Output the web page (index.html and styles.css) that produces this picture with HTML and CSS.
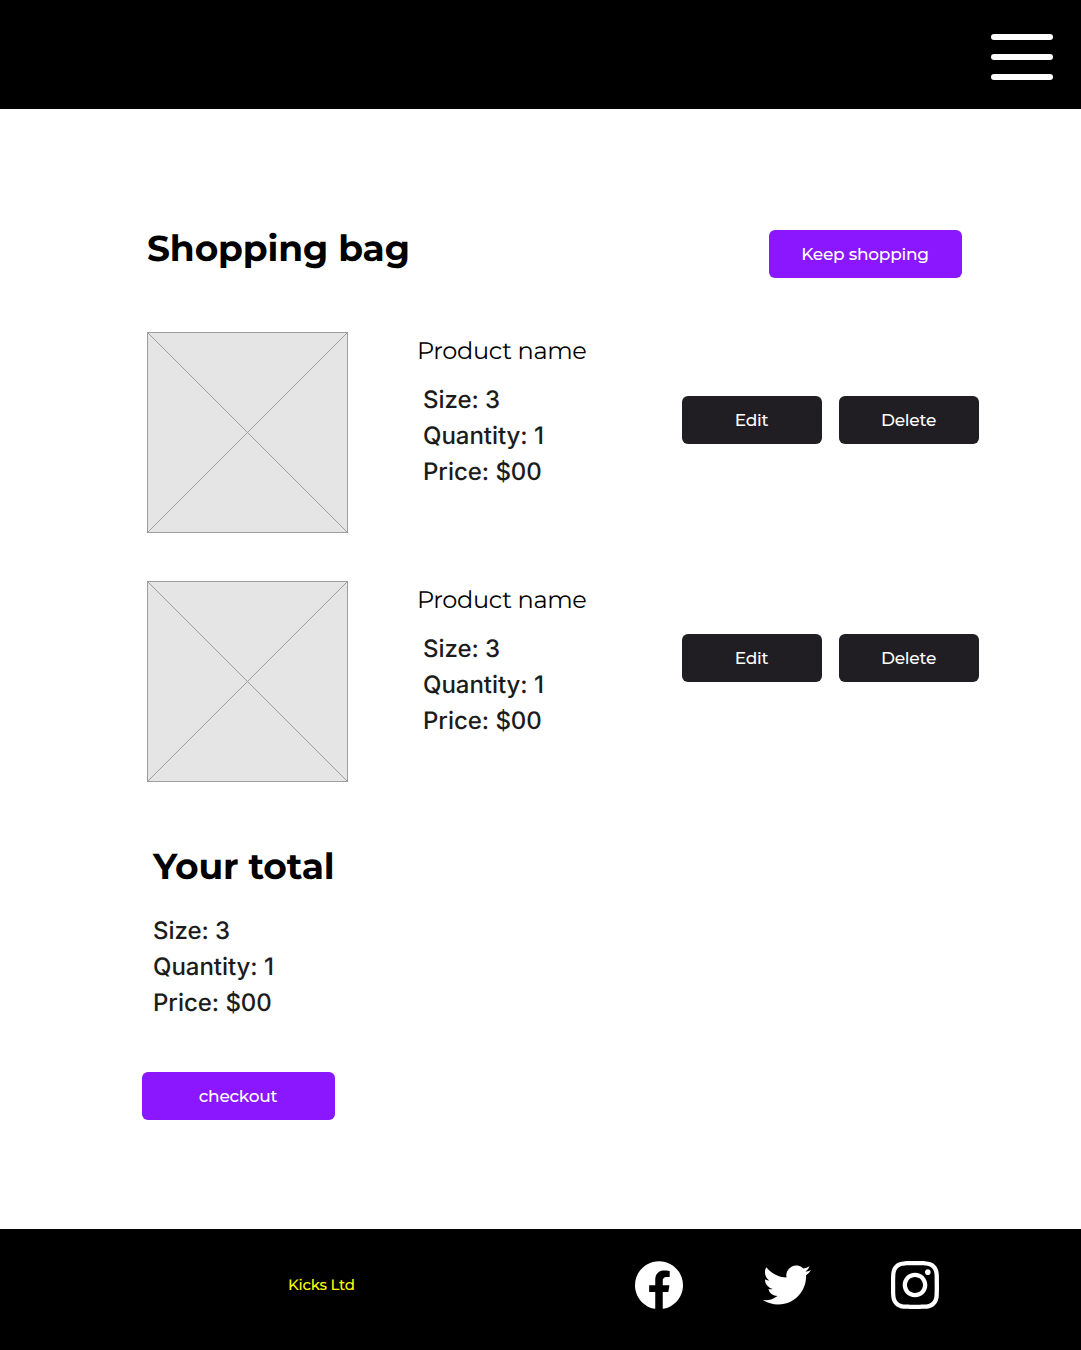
FILE: index.html
```html
<!DOCTYPE html>
<html lang="en">
<head>
<meta charset="utf-8">
<title>Shopping bag</title>
<link rel="stylesheet" href="styles.css">
</head>
<body>
<header class="topbar">
  <button class="menu" aria-label="Menu"><span class="menu-bar"></span><span class="menu-bar"></span><span class="menu-bar"></span></button>
</header>
<main class="page">
  <div class="bag-head">
    <h1 class="title title-bag">Shopping bag</h1>
    <button class="btn btn-primary">Keep shopping</button>
  </div>
  <section class="product">
    <svg class="thumb" viewBox="0 0 201 201"><rect x=".5" y=".5" width="200" height="200"/><path d="M.5 .5l200 200M200.5 .5l-200 200"/></svg>
    <div class="info">
      <h2 class="name">Product name</h2>
      <ul class="details"><li>Size: 3</li><li>Quantity: 1</li><li>Price: $00</li></ul>
    </div>
    <div class="actions">
      <button class="btn btn-dark">Edit</button>
      <button class="btn btn-dark">Delete</button>
    </div>
  </section>
  <section class="product product-last">
    <svg class="thumb" viewBox="0 0 201 201"><rect x=".5" y=".5" width="200" height="200"/><path d="M.5 .5l200 200M200.5 .5l-200 200"/></svg>
    <div class="info">
      <h2 class="name">Product name</h2>
      <ul class="details"><li>Size: 3</li><li>Quantity: 1</li><li>Price: $00</li></ul>
    </div>
    <div class="actions">
      <button class="btn btn-dark">Edit</button>
      <button class="btn btn-dark">Delete</button>
    </div>
  </section>
  <section class="total">
    <h2 class="title">Your total</h2>
    <ul class="details"><li>Size: 3</li><li>Quantity: 1</li><li>Price: $00</li></ul>
  </section>
  <button class="btn btn-primary checkout">checkout</button>
</main>
<footer class="footer">
  <span class="brand">Kicks Ltd</span>
  <nav class="social">
    <svg class="icon" viewBox="0 0 24 24"><path d="M24 12.073c0-6.627-5.373-12-12-12s-12 5.373-12 12c0 5.99 4.388 10.954 10.125 11.854v-8.385H7.078v-3.47h3.047V9.43c0-3.007 1.792-4.669 4.533-4.669 1.312 0 2.686.235 2.686.235v2.953H15.83c-1.491 0-1.956.925-1.956 1.874v2.25h3.328l-.532 3.47h-2.796v8.385C19.612 23.027 24 18.062 24 12.073z"/></svg>
    <svg class="icon" viewBox="0 0 24 24"><path d="M23.953 4.57a10 10 0 01-2.825.775 4.958 4.958 0 002.163-2.723c-.951.555-2.005.959-3.127 1.184a4.92 4.92 0 00-8.384 4.482C7.69 8.095 4.067 6.13 1.64 3.162a4.822 4.822 0 00-.666 2.475c0 1.71.87 3.213 2.188 4.096a4.904 4.904 0 01-2.228-.616v.06a4.923 4.923 0 003.946 4.827 4.996 4.996 0 01-2.212.085 4.936 4.936 0 004.604 3.417 9.867 9.867 0 01-6.102 2.105c-.39 0-.779-.023-1.17-.067a13.995 13.995 0 007.557 2.209c9.053 0 13.998-7.496 13.998-13.985 0-.21 0-.42-.015-.63A9.935 9.935 0 0024 4.59z"/></svg>
    <svg class="icon" viewBox="0 0 24 24"><path d="M12 0C8.74 0 8.333.015 7.053.072 5.775.132 4.905.333 4.14.63c-.789.306-1.459.717-2.126 1.384S.935 3.35.63 4.14C.333 4.905.131 5.775.072 7.053.012 8.333 0 8.74 0 12s.015 3.667.072 4.947c.06 1.277.261 2.148.558 2.913.306.788.717 1.459 1.384 2.126.667.666 1.336 1.079 2.126 1.384.766.296 1.636.499 2.913.558C8.333 23.988 8.74 24 12 24s3.667-.015 4.947-.072c1.277-.06 2.148-.262 2.913-.558.788-.306 1.459-.718 2.126-1.384.666-.667 1.079-1.335 1.384-2.126.296-.765.499-1.636.558-2.913.06-1.28.072-1.687.072-4.947s-.015-3.667-.072-4.947c-.06-1.277-.262-2.149-.558-2.913-.306-.789-.718-1.459-1.384-2.126C21.319 1.347 20.651.935 19.86.63c-.765-.297-1.636-.499-2.913-.558C15.667.012 15.26 0 12 0zm0 2.16c3.203 0 3.585.016 4.85.071 1.17.055 1.805.249 2.227.415.562.217.96.477 1.382.896.419.42.679.819.896 1.381.164.422.36 1.057.413 2.227.057 1.266.07 1.646.07 4.85s-.015 3.585-.074 4.85c-.061 1.17-.256 1.805-.421 2.227-.224.562-.479.96-.899 1.382-.419.419-.824.679-1.38.896-.42.164-1.065.36-2.235.413-1.274.057-1.649.07-4.859.07-3.211 0-3.586-.015-4.859-.074-1.171-.061-1.816-.256-2.236-.421-.569-.224-.96-.479-1.379-.899-.421-.419-.69-.824-.9-1.38-.165-.42-.359-1.065-.42-2.235-.045-1.26-.061-1.649-.061-4.844 0-3.196.016-3.586.061-4.861.061-1.17.255-1.814.42-2.234.21-.57.479-.96.9-1.381.419-.419.81-.689 1.379-.898.42-.166 1.051-.361 2.221-.421 1.275-.045 1.65-.06 4.859-.06l.045.03zm0 3.678c-3.405 0-6.162 2.76-6.162 6.162 0 3.405 2.76 6.162 6.162 6.162 3.405 0 6.162-2.76 6.162-6.162 0-3.405-2.76-6.162-6.162-6.162zM12 16c-2.21 0-4-1.79-4-4s1.79-4 4-4 4 1.79 4 4-1.79 4-4 4zm7.846-10.405c0 .795-.646 1.44-1.44 1.44-.795 0-1.44-.646-1.44-1.44 0-.794.646-1.439 1.44-1.439.793-.001 1.44.645 1.44 1.439z"/></svg>
  </nav>
</footer>
</body>
</html>
```
FILE: styles.css
```css
* { box-sizing: border-box; margin: 0; padding: 0; }
body {
  min-height: 1350px;
  display: flex;
  flex-direction: column;
  background: #fff;
  color: #000;
  font-family: Montserrat, Inter, sans-serif;
  text-rendering: geometricPrecision;
}
button { border: 0; background: none; font: inherit; color: inherit; }
ul { list-style: none; }

.topbar {
  height: 109px;
  background: #000;
  display: flex;
  justify-content: flex-end;
  padding: 34px 28px 0 0;
}
.menu { width: 62px; height: 46px; display: flex; flex-direction: column; justify-content: space-between; }
.menu-bar { width: 62px; height: 6px; border-radius: 3px; background: #fff; }

.page { flex: 1; padding: 121px 102px 0 147px; }
.bag-head { display: flex; justify-content: space-between; height: 102px; padding-right: 17px; }
.title { font-size: 36px; font-weight: 700; line-height: 46px; letter-spacing: -.15px; white-space: nowrap; }
.title-bag { margin-top: -4px; }

.btn {
  width: 193px;
  height: 48px;
  border-radius: 6px;
  display: flex;
  align-items: center;
  justify-content: center;
  color: #fff;
  font-size: 17px;
  font-weight: 500;
  line-height: 24px;
  letter-spacing: -.27px;
  padding-right: 1px;
  white-space: nowrap;
}
.btn-primary { background: #8a17ff; }
.btn-dark { width: 140px; background: #201d23; }

.product { display: flex; height: 249px; }
.product-last { height: 263px; }
.thumb { width: 201px; height: 201px; fill: #e5e5e5; stroke: #9e9e9e; }
.info { width: 265px; margin-left: 69px; padding-top: 4px; }
.name { font-size: 24px; font-weight: 400; line-height: 32px; letter-spacing: -.33px; white-space: nowrap; }
.details { font-family: Inter, sans-serif; font-size: 24px; line-height: 36px; font-weight: 500; letter-spacing: -.04px; color: #1c1c1c; }
.info .details { margin: 14px 0 0 6px; }
.actions { display: flex; gap: 17px; padding-top: 64px; }
.product-last .actions { padding-top: 53px; }

.total { padding-left: 6px; height: 228px; }
.total .details { margin-top: 23px; }
.checkout { margin-left: -5px; }

.footer {
  height: 121px;
  background: #000;
  display: flex;
  justify-content: space-between;
  align-items: center;
  padding: 0 142px 9px 288px;
}
.brand { color: #ff0; font-size: 15px; font-weight: 500; line-height: 20px; letter-spacing: -.25px; white-space: nowrap; }
.social { display: flex; gap: 80px; }
.icon { width: 48px; height: 48px; fill: #fff; }
```
